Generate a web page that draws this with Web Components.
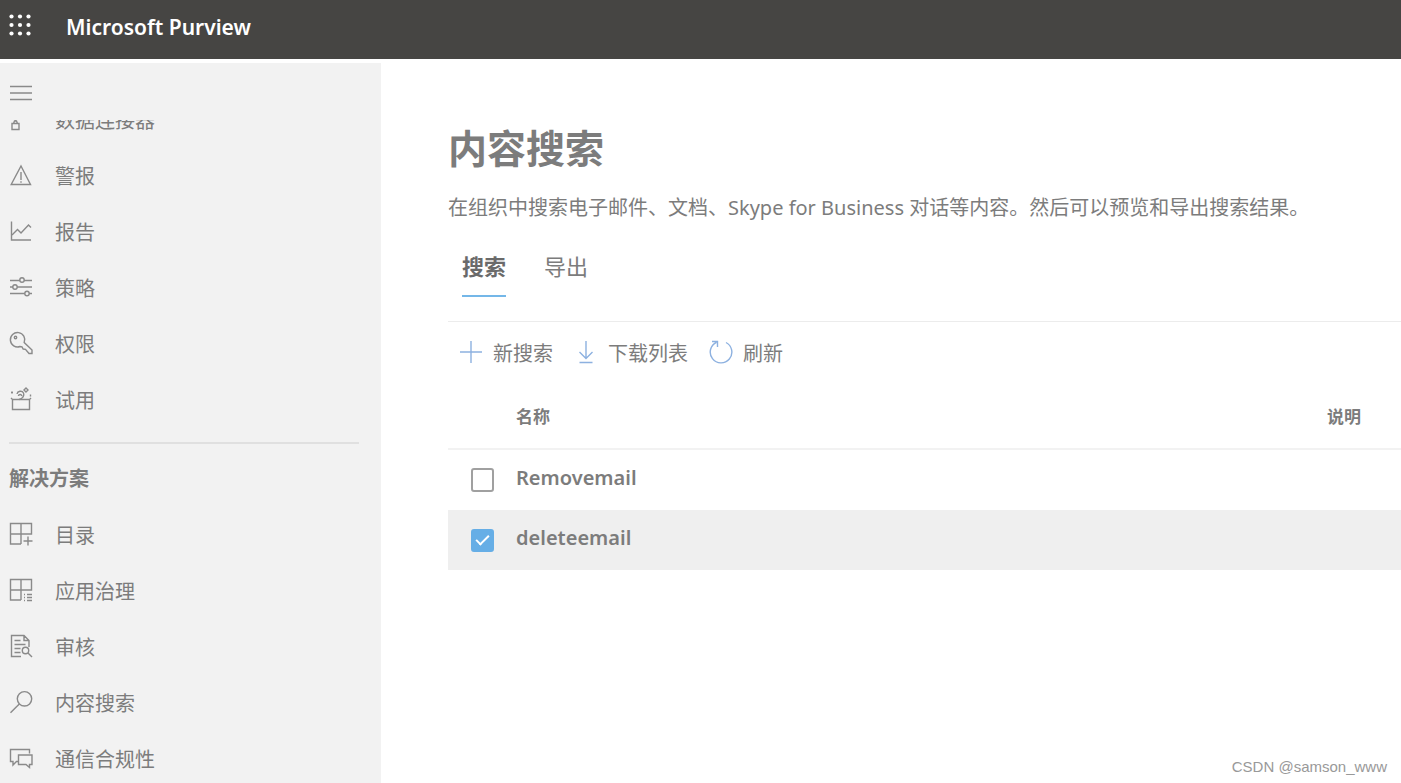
<!DOCTYPE html>
<html lang="zh-CN">
<head>
<meta charset="utf-8">
<meta name="viewport" content="width=device-width, initial-scale=1">
<title>内容搜索 - Microsoft Purview</title>
<style>
  html, body { margin: 0; height: 100%; }
  body {
    font-family: "Noto Sans", "Noto Sans CJK SC", sans-serif;
    font-size: 20px;
    color: #7c7c7c;
    background: #fff;
    overflow: hidden;
  }
</style>
</head>
<body>
<pv-app>
  <pv-header slot="header">Microsoft Purview</pv-header>
  <pv-nav slot="nav">
    <pv-nav-item icon="lock">数据连接器</pv-nav-item>
    <pv-nav-item icon="alert">警报</pv-nav-item>
    <pv-nav-item icon="report">报告</pv-nav-item>
    <pv-nav-item icon="policy">策略</pv-nav-item>
    <pv-nav-item icon="key">权限</pv-nav-item>
    <pv-nav-item icon="trial">试用</pv-nav-item>
    <pv-nav-heading>解决方案</pv-nav-heading>
    <pv-nav-item icon="catalog">目录</pv-nav-item>
    <pv-nav-item icon="apps">应用治理</pv-nav-item>
    <pv-nav-item icon="audit">审核</pv-nav-item>
    <pv-nav-item icon="search">内容搜索</pv-nav-item>
    <pv-nav-item icon="chat">通信合规性</pv-nav-item>
  </pv-nav>
  <pv-page>
    <span slot="title">内容搜索</span>
    <span slot="description">在组织中搜索电子邮件、文档、Skype for Business 对话等内容。然后可以预览和导出搜索结果。</span>
    <pv-tabs slot="tabs">
      <pv-tab selected>搜索</pv-tab>
      <pv-tab>导出</pv-tab>
    </pv-tabs>
    <pv-toolbar>
      <pv-command icon="add">新搜索</pv-command>
      <pv-command icon="download">下载列表</pv-command>
      <pv-command icon="refresh">刷新</pv-command>
    </pv-toolbar>
    <pv-search-table></pv-search-table>
  </pv-page>
  <pv-credit slot="credit">CSDN @samson_www</pv-credit>
</pv-app>

<script>
const ICONS = {
  waffle: [3.5, 12, 20.5].map(y => [3.5, 12, 20.5].map(x =>
    `<circle cx="${x}" cy="${y}" r="2.1" fill="currentColor" stroke="none"/>`).join('')).join(''),
  menu: '<path d="M1 5.5h22M1 12h22M1 18.5h22"/>',
  lock: '<path d="M3 16.500h7v6h-7zM4.500 16.500l1-2.500h2l1 2.500M6.500 14v-3"/>',
  alert: '<path d="M12 3L21.500 21.500H2.200z"/><path d="M12 9v8M12 18.200v1.500"/>',
  report: '<path d="M2.500 2.500v18.500H22"/><path d="M3 16l5.500-5.500 3.500 3.500 7.500-8 2.500 2.500"/>',
  policy: '<path d="M1 5.500h10M15 5.500h8M1 12h3M8 12h15M1 18.500h15M20 18.500h3"/><circle cx="13" cy="5" r="2.200"/><circle cx="6" cy="12" r="2.200"/><circle cx="18" cy="18.500" r="2.200"/>',
  key: '<path d="M15.200 11.500a7.200 7.200 0 1 0-4.200 4l2 .3 1.200 2.200 2.300.3 3.500 4.200h3v-3.500z"/><circle cx="6.500" cy="6.500" r="1.200"/>',
  trial: '<path d="M3.500 12.500h17v10h-17zM3.500 12.500L2 11M20.500 12.500l1.500-1.500"/><path d="M10 12.500c4-1 5.500-4 4.500-6.500-1.500-3-6-2-6.500 1M9.500 9c0-2 3.500-2 3.200.2"/><path d="M17 1l2 2-2 2-2-2zM3 4.500v2M2 5.500h2M21.500 7.500v2"/>',
  catalog: '<path d="M1.500 1.500h21v10.500h-21zM12 1.500v20.500M1.500 12v10H12M19 14.500v9M14.500 19h9"/>',
  apps: '<path d="M1.500 1.500h21v10.500h-21zM12 1.500v20.500M1.500 12v10H12M15 16.500h1M18 16.500h5M15 19.500h1M18 19.500h5M15 22.500h1M18 22.500h5"/>',
  audit: '<path d="M12 22.500H2.500v-21H15l5 5V13M15 1.500v5h5M5.500 6.500h6M5.500 10.500h11M5.500 14.500h6M5.500 18.500h6"/><circle cx="16.500" cy="16.500" r="3.200"/><path d="M19 19l4 4"/>',
  search: '<circle cx="15.500" cy="8.800" r="7.200"/><path d="M10.300 14L1.500 22.800"/>',
  chat: '<path d="M9 15.500H7.500L4 19V15.500H1.500V3.500h19v4"/><path d="M9.500 9h13.500v9.500h-2.500v3L17 18.500H9.500z"/>',
  add: '<path d="M12 1v22M1 12h22"/>',
  download: '<path d="M12 1v17M5.500 12l6.500 6.500 6.500-6.500M5.500 22.500h13"/>',
  refresh: '<path d="M17 2.500A10.800 10.800 0 1 1 7.500 2.300M3 1.500h5.500v5.500"/>'
};

/* Base class: fills an open shadow root with the element's styles and markup. */
class PvElement extends HTMLElement {
  constructor() {
    super();
    this.attachShadow({ mode: 'open' });
  }
  connectedCallback() {
    const t = document.createElement('template');
    t.innerHTML = `<style>${this.css()}</style>${this.html()}`;
    this.shadowRoot.replaceChildren(t.content.cloneNode(true));
  }
}

customElements.define('pv-icon', class extends PvElement {
  css() { return ':host{display:block;flex:none;width:24px;height:24px}svg{display:block;width:100%;height:100%}'; }
  html() {
    return `<svg viewBox="0 0 24 24" fill="none" stroke="currentColor" stroke-width="1.4" aria-hidden="true">${ICONS[this.getAttribute('name')]}</svg>`;
  }
});

customElements.define('pv-app', class extends PvElement {
  css() { return `
    :host{display:flex;flex-direction:column;height:100vh;overflow:hidden}
    .body{flex:1;min-height:0;display:grid;grid-template-columns:381px minmax(0,1fr);margin-top:4px}
    main{min-width:0}
  `; }
  html() { return `
    <slot name="header"></slot>
    <div class="body"><slot name="nav"></slot><main><slot></slot></main></div>
    <slot name="credit"></slot>
  `; }
});

customElements.define('pv-header', class extends PvElement {
  css() { return `
    :host{display:flex;align-items:center;box-sizing:border-box;height:59px;padding:0 8px 6px;gap:34px;
      background:#464543;color:#fff;font-size:21px;font-weight:600;flex:none}
    button{border:0;padding:0 0 4px;background:none;color:inherit}
  `; }
  html() { return `<button type="button" aria-label="应用启动器"><pv-icon name="waffle"></pv-icon></button><span><slot></slot></span>`; }
});

customElements.define('pv-nav', class extends PvElement {
  css() { return `
    :host{display:flex;flex-direction:column;min-height:0;background:#f2f2f2}
    .menu{height:57px;box-sizing:border-box;padding:18px 9px 0;flex:none}
    button{display:block;border:0;padding:0;background:none;color:#8a8a8a}
    nav{flex:1;min-height:0;overflow:hidden}
    .list{margin-top:-29px}
  `; }
  html() { return `
    <div class="menu"><button type="button" aria-label="折叠导航"><pv-icon name="menu"></pv-icon></button></div>
    <nav><div class="list"><slot></slot></div></nav>
  `; }
});

customElements.define('pv-nav-item', class extends PvElement {
  css() { return `
    :host{display:block}
    a{display:flex;align-items:center;gap:22px;height:56px;padding-left:9px;color:inherit;text-decoration:none}
    pv-icon{color:#8a8a8a}
  `; }
  html() { return `<a href="#"><pv-icon name="${this.getAttribute('icon')}"></pv-icon><span><slot></slot></span></a>`; }
});

customElements.define('pv-nav-heading', class extends PvElement {
  css() { return `
    :host{display:block;margin:15px 22px 0 9px;border-top:2px solid #e0e0e0}
    h2{margin:0;padding-top:8px;font-size:20px;line-height:54px;font-weight:600}
  `; }
  html() { return '<h2><slot></slot></h2>'; }
});

customElements.define('pv-page', class extends PvElement {
  css() { return `
    :host{display:block;padding:59px 0 0 67px}
    h1{margin:0;font-size:39px;line-height:52px;font-weight:700}
    p{margin:18px 0 15px;line-height:32px;white-space:nowrap}
  `; }
  html() { return `
    <h1><slot name="title"></slot></h1>
    <p><slot name="description"></slot></p>
    <slot name="tabs"></slot>
    <slot></slot>
  `; }
});

customElements.define('pv-tabs', class extends PvElement {
  css() { return ':host{display:flex;gap:38px;padding:0 14px 24px;border-bottom:1px solid #ececec}'; }
  html() { return '<slot></slot>'; }
});

customElements.define('pv-tab', class extends PvElement {
  css() { return `
    :host{display:block}
    button{display:block;box-sizing:border-box;height:58px;padding:0 0 4px;border:0;border-bottom:2px solid transparent;
      background:none;font:inherit;font-size:22px;color:inherit}
    :host([selected]) button{font-weight:600;color:#6a6a6a;border-color:#74b7e8}
  `; }
  html() { return '<button type="button"><slot></slot></button>'; }
});

customElements.define('pv-toolbar', class extends PvElement {
  css() { return ':host{display:flex;align-items:center;gap:21px;height:60px;padding-left:11px}'; }
  html() { return '<slot></slot>'; }
});

customElements.define('pv-command', class extends PvElement {
  css() { return `
    :host{display:block}
    button{display:flex;align-items:center;gap:10px;border:0;padding:0;background:none;font:inherit;color:inherit}
    pv-icon{color:#8db1e0}
  `; }
  html() { return `<button type="button"><pv-icon name="${this.getAttribute('icon')}"></pv-icon><span><slot></slot></span></button>`; }
});

customElements.define('pv-search-table', class extends PvElement {
  css() { return `
    :host{display:block}
    table{width:100%;border-collapse:collapse;table-layout:fixed}
    .pick{width:68px}
    .note{width:74px}
    th{height:66px;padding:0;text-align:left;font-size:17px;font-weight:600;border-bottom:2px solid #f2f2f2}
    td{height:60px;padding:0}
    tr.selected{background:#efefef}
    td label{display:block;padding-bottom:6px;font-weight:600}
    input{appearance:none;display:grid;place-content:center;box-sizing:border-box;width:23px;height:24px;
      margin:0 0 0 23px;border:2px solid #a0a0a0;border-radius:3px;background:#fff}
    input:checked{height:23px;border-color:#66aee6;background:#66aee6}
    input:checked::before{content:"";width:11px;height:5px;margin-bottom:4px;border:solid #fff;border-width:0 0 2px 2px;rotate:-45deg}
  `; }
  html() {
    const rows = [['Removemail', false], ['deleteemail', true]];
    return `<table>
      <thead><tr><th class="pick"></th><th>名称</th><th class="note">说明</th></tr></thead>
      <tbody>${rows.map(([name, on], i) => `
        <tr class="${on ? 'selected' : ''}">
          <td><input type="checkbox" id="row${i}" ${on ? 'checked' : ''}></td>
          <td><label for="row${i}">${name}</label></td><td></td>
        </tr>`).join('')}
      </tbody></table>`;
  }
});

/* Credit line that floats over the page's bottom right corner. */
customElements.define('pv-credit', class extends PvElement {
  css() { return ':host{position:absolute;right:14px;bottom:6px;font:15px/20px "Liberation Sans",sans-serif;color:#999}'; }
  html() { return '<slot></slot>'; }
});
</script>
</body>
</html>
